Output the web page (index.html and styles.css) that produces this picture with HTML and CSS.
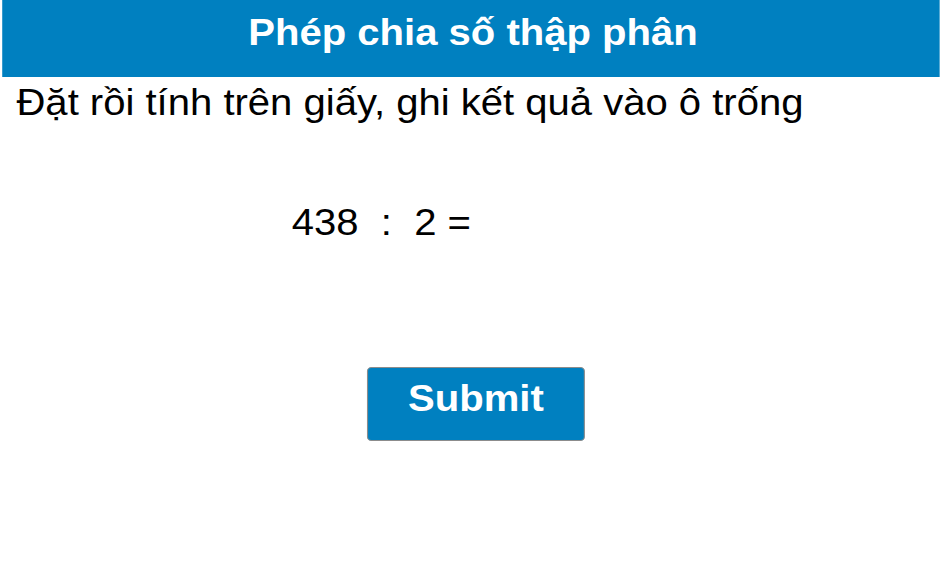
FILE: index.html
```html
<!DOCTYPE html>
<html lang="vi">
<head>
<meta charset="utf-8">
<title>Phép chia số thập phân</title>
<link rel="stylesheet" href="styles.css">
</head>
<body>
<div class="page">
  <header class="banner">
    <h1 class="title">Phép chia số thập phân</h1>
  </header>
  <p class="instruction">Đặt rồi tính trên giấy, ghi kết quả vào ô trống</p>
  <p class="equation">438&nbsp; :&nbsp; 2 =</p>
  <div class="actions">
    <button class="submit" type="button">Submit</button>
  </div>
</div>
</body>
</html>
```

FILE: styles.css
```css
html, body {
  margin: 0;
  padding: 0;
  background: #ffffff;
  overflow: hidden;
}

.page {
  width: 845.3px;
  height: 564px;
  font-family: "Liberation Sans", Arial, sans-serif;
  font-size: 36px;
  line-height: 42px;
  color: #000000;
  transform: scaleX(1.112);
  transform-origin: 0 0;
}

.banner {
  margin-left: 1.8px;
  background: #0080c0;
  padding: 12px 0 23px 3.6px;
  text-align: center;
}

.title {
  margin: 0;
  font-size: 36px;
  line-height: 42px;
  font-weight: bold;
  color: #ffffff;
}

.instruction {
  margin: 5px 0 0;
  padding-left: 14.8px;
}

.equation {
  margin: 77.5px 0 0;
  padding-left: 262.4px;
  white-space: pre;
}

.actions {
  display: flex;
  margin-top: 123.5px;
  padding-left: 330px;
}

.submit {
  box-sizing: border-box;
  width: 196px;
  height: 74px;
  margin: 0;
  padding: 10px 0 20px;
  background: #0080c0;
  color: #ffffff;
  border: 1px solid #8c8c8c;
  border-radius: 4px;
  font-family: "Liberation Sans", Arial, sans-serif;
  font-size: 36px;
  line-height: 42px;
  font-weight: bold;
  text-align: center;
  cursor: pointer;
}
```
